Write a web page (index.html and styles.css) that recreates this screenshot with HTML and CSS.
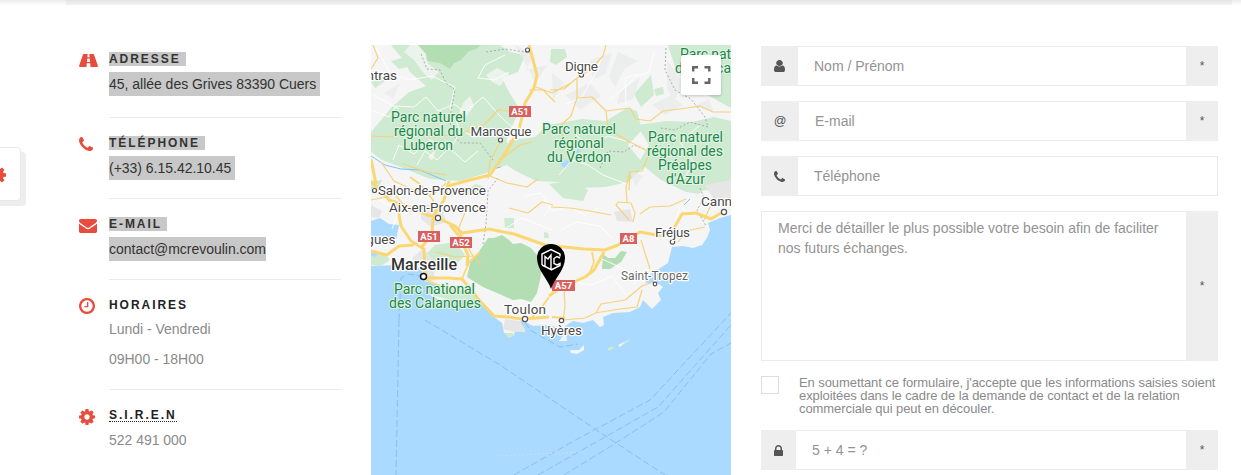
FILE: index.html
```
<!DOCTYPE html>
<html lang="fr">
<head>
<meta charset="utf-8">
<title>Contact</title>
<link rel="stylesheet" href="styles.css">
</head>
<body>
<svg class="defs" width="0" height="0">
  <symbol id="phone" viewBox="192 128 1408 1408"><path d="M1600 1240q0 27-10 70.500t-21 68.500q-21 50-122 106-94 51-186 51-27 0-53-3.500t-57.500-12.500-47-14.500-55.500-20.500-49-18q-98-35-175-83-127-79-264-216t-216-264q-48-77-83-175-3-9-18-49t-20.500-55.500-14.500-47-12.500-57.500-3.500-53q0-92 51-186 56-101 106-122 25-11 68.500-21t70.500-10q14 0 21 3 18 6 53 76 11 19 30 54t35 63.500 31 53.500q3 4 17.500 25t21.500 35.500 7 28.500q0 20-28.500 50t-62 55-62 53-28.500 46q0 9 5 22.500t8.500 20.500 14 24 11.500 19q76 137 174 235t235 174q2 1 19 11.500t24 14 20.500 8.500 22.500 5q18 0 46-28.500t53-62 55-62 50-28.500q14 0 28.500 7t35.500 21.500 25 17.500q25 15 53.500 31t63.500 35 54 30q70 35 76 53 3 7 3 21z"/></symbol>
  <symbol id="cog" viewBox="128 128 1536 1536"><path d="M1152 896q0-106-75-181t-181-75-181 75-75 181 75 181 181 75 181-75 75-181zm512-109v222q0 12-8 23t-20 13l-185 28q-19 54-39 91 35 50 107 138 10 12 10 25t-9 23q-27 37-99 108t-94 71q-12 0-26-9l-138-108q-44 23-91 38-16 136-29 186-7 28-36 28h-222q-14 0-24.500-8.500t-11.500-21.500l-28-184q-49-16-90-37l-141 107q-10 9-25 9-14 0-25-11-126-114-165-168-7-10-7-23 0-12 8-23 15-21 51-66.500t54-70.500q-27-50-41-99l-183-27q-13-2-21-12.500t-8-23.500v-222q0-12 8-23t19-13l186-28q14-46 39-92-40-57-107-138-10-12-10-24 0-10 9-23 26-36 98.500-107.500t94.500-71.500q13 0 26 10l138 107q44-23 91-38 16-136 29-186 7-28 36-28h222q14 0 24.500 8.500t11.500 21.500l28 184q49 16 90 37l142-107q9-9 24-9 13 0 25 10 129 119 165 170 7 8 7 22 0 12-8 23-15 21-51 66.500t-54 70.500q26 50 41 98l183 28q13 2 21 12.500t8 23.500z"/></symbol>
</svg>

<div class="topbar"><div class="topbar-strip"></div></div>
<div class="side-tab"><svg class="side-cog"><use href="#cog"/></svg></div>

<main class="contact">
  <section class="infos">
    <div class="info first">
      <div class="ico road"><svg width="19" height="13" viewBox="0 0 19 13"><path fill-rule="evenodd" d="M4.600 0H8.700L8.400 3.200H10.600L10.300 0H14.400Q14.800 0 15 .5L18.800 11.400Q19.200 13 18 13H11.500L11.200 9.300H7.800L7.500 13H1Q-.2 13 .2 11.400L4 .5Q4.200 0 4.600 0ZM8.300 4.600 8 7.900H11L10.700 4.600Z"/></svg></div>
      <div class="txt"><h4><span class="sel">ADRESSE&nbsp;</span></h4><p><span class="sel">45, allée des Grives 83390 Cuers&nbsp;</span></p></div>
    </div>
    <div class="info">
      <div class="ico"><svg width="14" height="14"><use href="#phone"/></svg></div>
      <div class="txt"><h4><span class="sel">TÉLÉPHONE&nbsp;</span></h4><p><span class="sel">(+33) 6.15.42.10.45&nbsp;</span></p></div>
    </div>
    <div class="info">
      <div class="ico mail"><svg width="18" height="14" viewBox="0 256 1792 1408" preserveAspectRatio="none"><path d="M1792 710v794q0 66-47 113t-113 47h-1472q-66 0-113-47t-47-113v-794q44 49 101 87 362 246 497 345 57 42 92.500 65.500t94.500 48 110 24.500h2q51 0 110-24.500t94.500-48 92.500-65.500q170-123 498-345 57-39 100-87zm0-294q0 79-49 151t-122 123q-376 261-468 325-10 7-42.500 31t-54 38.500-52 32.500-57.500 27-50 9h-2q-23 0-50-9t-57.500-27-52-32.500-54-38.500-42.500-31q-91-64-262-182.500t-205-142.500q-62-42-117-115.500t-55-136.500q0-78 41.500-130t118.500-52h1472q65 0 112.500 47t47.500 113z"/></svg></div>
      <div class="txt"><h4><span class="sel">E-MAIL&nbsp;</span></h4><p><span class="sel">contact@mcrevoulin.com</span></p></div>
    </div>
    <div class="info hours">
      <div class="ico"><svg width="16" height="16" viewBox="128 128 1536 1536"><path d="M1024 544v448q0 14-9 23t-23 9h-320q-14 0-23-9t-9-23v-64q0-14 9-23t23-9h224v-352q0-14 9-23t23-9h64q14 0 23 9t9 23zm416 352q0-148-73-273t-198-198-273-73-273 73-198 198-73 273 73 273 198 198 273 73 273-73 198-198 73-273zm224 0q0 209-103 385.500t-279.500 279.500-385.500 103-385.500-103-279.500-279.500-103-385.500 103-385.500 279.500-279.500 385.500-103 385.500 103 279.500 279.500 103 385.500z"/></svg></div>
      <div class="txt"><h4>HORAIRES</h4><p>Lundi - Vendredi</p><p>09H00 - 18H00</p></div>
    </div>
    <div class="info last">
      <div class="ico"><svg width="16" height="16"><use href="#cog"/></svg></div>
      <div class="txt"><h4><abbr>S.I.R.E.N</abbr></h4><p>522 491 000</p></div>
    </div>
  </section>

  <section class="map">
    <svg class="map-canvas" width="360" height="430" viewBox="371 45 360 430">
      <rect class="sea" x="371" y="45" width="360" height="430"/>
      <path class="land" d="M371 45H731V215L720 218 708 223 710 230 707 238 702 245 693 248 683 246 672 247 668 263 660 268 650 274 645 283 657 283 663 287 658 293 661 300 652 309 643 300 640 307 630 312 613 313 603 317 604 325 600 327 593 320 583 323 573 321 565 326 567 341 559 341 563 336 557 327 545 325 533 326 522 320 517 325 525 332 515 331 514 335 504 333 502 323 494 317 486 308 480 300 470 299 450 300 440 300 430 295 437 285 425 281 423 270 416 267 400 265 371 266Z"/>
      <g class="park pale">
        <path d="M391 45H500L510 52 525 55 518 72 502 78 509 92 520 110 510 130 500 160 490 172 460 181 430 179 403 168 382 160 371 152V132L392 107 409 92 426 86 410 72 405 62Z"/>
        <path d="M371 82 379 75 388 79 375 88Z"/><path d="M391 61 406 57 412 66 399 69Z"/>
        <path d="M510 140 535 137 548 125 582 119 606 121 627 108 637 111 642 130 628 145 645 166 628 182 605 187 578 188 559 182 536 181 514 170 499 160Z"/>
        <path d="M637 125 667 121 692 122 714 117 731 121V183L710 190 686 192 661 180 639 162 649 145Z"/>
        <path d="M668 45H731V108L711 97 691 85 676 70Z"/>
        <path d="M551 49 565 49 567 57 556 65 550 62Z"/><path d="M634 94 651 75 654 95 641 107Z"/><path d="M654 89 663 87 664 94 656 96Z"/>
        <path d="M549 184 573 180 588 190 583 201 563 198Z"/><path d="M504 218 514 218 514 228 505 228Z"/>
        <path d="M426 254 435 245 455 242 465 255 455 266 435 263Z"/><path d="M371 255 384 253 390 260 381 266 371 265Z"/>
        <path d="M428 294 445 288 473 291 480 300 454 301Z"/><path d="M371 182 382 180 378 188 371 190Z"/>
        <path d="M544 232 548 233 549 238 544 238Z"/><path d="M681 181 706 187 699 194 687 192Z"/>
        <path d="M481 160 504 140 518 152 509 164 493 170Z"/><path d="M460 195 476 184 484 187 473 195Z"/>
      </g>
      <path class="land" d="M425 45 436 55 427 63 439 72 432 80 424 74 414 60 404 52 410 45ZM486 75 497 68 509 74 500 86 492 82ZM463 103 470 96 474 106 465 118 459 113ZM428 157 436 149 432 161Z" opacity=".75"/>
      <g class="park deep">
        <path d="M418 45H481L476 49 469 51 461 60 454 63 450 69 440 63 427 61 426 54Z"/>
        <path d="M467 277 470 263 480 250 488 238 494 238 502 235 509 240 513 244 521 243 531 248 543 262 540 280 537 293 531 302 521 299 513 300 497 293 483 287Z"/>
        <path d="M603 254 608 258 615 258 621 251 627 252 621 262 610 269 602 269Z"/>
      </g>
      <g class="urban"><path d="M423 249 432 258 435 280 426 282 420 267 412 258Z"/><path d="M505 319 520 321 526 331 514 332 503 329Z"/><path d="M421 205 440 205 447 222 431 227 421 219Z"/><path d="M614 212 630 209 633 222 617 221Z"/><path d="M705 185 731 180V202L714 200Z"/><path d="M371 205 382 211 379 218 371 217Z"/></g>
      <g class="relief"><path d="M590 60 612 53 605 74 593 80ZM618 52 638 61 625 68 615 87 609 77ZM566 95 590 83 601 96 580 110ZM620 92 640 77 633 99 617 104ZM667 60 683 83 674 102 667 88ZM515 45 535 55 525 70 547 65 536 83ZM652 105 671 95 683 105 665 115ZM691 107 709 99 713 111ZM552 73 564 83 553 100ZM384 93 400 83 393 99Z"/><path d="M664 146 674 160 662 153ZM630 170 643 176 635 187Z"/></g>
      <g class="sea"><path d="M371 221 380 218 389 224 399 225 396 240 384 245 376 240 371 235Z"/><path d="M561 163 567 160 570 163 566 168 562 167Z"/><path d="M575 152 579 149 581 151 577 154Z"/><path d="M371 251 379 253 375 257 371 255Z"/></g>
      <path class="river" d="M371 156 385 165 401 169 420 170 446 181M496 168 501 167M684 205 690 199"/>
      <path class="minor" d="M376 47 390 73 409 80 432 76 455 87 450 108 460 130 475 137M371 110 389 117 396 106 414 107 426 97 438 111 454 104 465 112 483 97 500 116 515 130M393 160 399 145 414 154 430 140 450 150 462 128M417 165 425 151 437 160 449 148 465 162 478 151M610 100 628 85 635 77 649 72 654 53M626 105 625 78 639 74M559 175 572 160 588 165 603 175 629 185M544 200 552 211 570 207 584 215 601 207M561 230 576 222 600 226 612 238M600 258 626 270 636 284M379 200 399 210 392 229M480 225 500 232 522 218 552 230M566 280 592 285 612 276 626 295M676 219 680 207 695 216M700 125 680 142 694 162 684 179"/>
      <path class="minor" d="M505 55 485 65 478 78 495 80 509 72M373 95 399 109M566 104 581 98 595 75 604 52M576 135 588 146 608 136 626 141M525 196 540 193 551 205 544 217"/>
      <path class="boundary" d="M421 54 427 69 440 70 446 83 455 90 451 112 450 133 461 143 480 143 493 160M486 52 505 49 531 53M666 48 665 70 675 90 691 99 705 117 708 127 690 122 675 130 660 128M600 168 608 151 624 152 634 145 646 150M483 244 486 224 488 191 498 178M700 188 704 198 697 210 706 226"/>
      <path class="secondary" d="M371 69 378 58 373 45M371 136 391 137 406 132 433 137 460 134 485 124 498 110 509 111M536 87 552 93 571 83 577 78M550 90 564 89 577 78 590 70 603 56 606 45M577 78 577 98 592 97 606 111 630 108 636 119 650 121 663 111 687 108 700 106 713 112 731 112M577 98 571 116 560 126 563 138M606 111 608 129 628 141 650 152 642 171 630 172 629 190M529 90 543 90 555 102M500 160 520 145 532 142M371 200 395 195 409 211 438 216M381 162 394 181 413 190 433 195 446 183M490 176 507 183 527 187 538 179M466 210 458 230 473 256 481 264M509 208 528 213 542 202 553 205M551 207 570 208 590 211 611 215M629 220 616 205 618 202 631 203 635 213 633 222M640 214 650 207 670 206 686 199M641 240 645 253 650 269M630 171 626 188 627 203M564 289 565 307 563 320 585 318 596 313 601 304 625 300 642 286 653 282M595 313 620 309 637 307 642 290M678 242 686 231 705 227M704 220 710 207 718 202M473 256 455 257 436 252M488 179 490 161 501 141M403 164 427 172 447 175"/>
      <path class="trunk" d="M529 45 533 60 537 75 534 88 525 103 519 130 504 155 490 175 466 181 448 186M371 159 376 184M371 181 389 200 410 207 427 215 438 218 455 226 462 233 489 229 514 234 545 245 584 249 605 250 618 245 628 239 640 232 662 236M449 181 444 200 433 217 432 234 421 248M397 203 401 226 411 241 424 249 425 275M450 225 460 237 468 255 467 266M423 278 448 278 462 279 480 301 494 316 508 317 522 319 536 318 549 317M549 296 560 288 585 277 594 270 604 252M673 230 682 214 696 213 711 219 721 213M371 251 387 255 399 246 414 245"/>
      <path class="trunk thin" d="M410 177 421 185 433 200 435 214M462 279 469 262 480 252M426 280 441 286 460 289M552 317 565 318M592 252 594 262 590 272M549 297 542 307 532 317"/>
      <g class="ferry"><path d="M399 320 396 475M424 275 421 276 408 274 401 278 399 320M425 320 500 365 604 435 665 475M514 475 572 442 650 400 731 313M538 475 575 454 658 407 731 325M564 475 608 448 664 412 711 354 731 343M525 322 530 330 560 347 578 344"/><path class="faint" d="M498 456 584 452"/></g>
      <path class="land" d="M570 350 579 350 584 345 584 350 577 354 571 353ZM618 345 626 341 620 347Z"/>
      <path class="park pale" d="M607 349 612 346 614 348 609 351ZM622 345 630 338 628 342ZM505 333 513 333 514 336 508 338Z"/>
      <g class="town">
        <circle cx="500.500" cy="140" r="2"/><circle cx="581.500" cy="75" r="2"/><circle cx="527.500" cy="50" r="2"/><circle cx="374.500" cy="190.500" r="2"/><circle cx="438" cy="218" r="2.600"/><circle cx="525" cy="319" r="2.600"/><circle cx="561.500" cy="320.500" r="2.200"/><circle cx="655" cy="284" r="1.800"/><circle cx="672.500" cy="242" r="2.200"/><circle cx="724" cy="212" r="2.600"/><circle class="city" cx="423.500" cy="276.500" r="3"/>
      </g>
      <g class="label">
        <text class="to-end" x="397" y="80">ntras</text>
        <text x="470.500" y="136" textLength="61">Manosque</text>
        <text x="565" y="71" textLength="33">Digne</text>
        <text x="378" y="195" textLength="108">Salon-de-Provence</text>
        <text x="389" y="212" textLength="97">Aix-en-Provence</text>
        <text class="to-end" x="395.500" y="243.500">gues</text>
        <text x="504" y="314" textLength="42">Toulon</text>
        <text x="541" y="335" textLength="41">Hyères</text>
        <text x="655" y="237" textLength="35">Fréjus</text>
        <text x="701" y="206">Cann</text>
        <text class="small" x="621" y="279.500" textLength="67">Saint-Tropez</text>
        <text class="big" x="391" y="270" textLength="66">Marseille</text>
      </g>
      <g class="label green">
        <text x="391" y="122" textLength="75">Parc naturel</text><text x="394" y="136" textLength="69">régional du</text><text x="403" y="150" textLength="50">Luberon</text>
        <text x="542" y="134" textLength="74">Parc naturel</text><text x="554" y="148" textLength="50">régional</text><text x="547" y="162" textLength="64">du Verdon</text>
        <text x="648" y="142" textLength="75">Parc naturel</text><text x="647" y="156" textLength="76">régional des</text><text x="658" y="170" textLength="54">Préalpes</text><text x="666" y="184" textLength="39">d'Azur</text>
        <text x="680" y="59" textLength="51">Parc nat</text><text x="675" y="73">d</text><text x="716" y="73" textLength="15">ca</text>
        <text x="394" y="294" textLength="81">Parc national</text><text x="389" y="308" textLength="92">des Calanques</text>
      </g>
      <g class="badge">
        <rect x="509" y="106" width="22" height="11"/><text x="520" y="115">A51</text>
        <rect x="418" y="231" width="22" height="11"/><text x="429" y="240">A51</text>
        <rect x="450" y="237" width="22" height="11"/><text x="461" y="246">A52</text>
        <rect x="620" y="233" width="17" height="11"/><text x="628.500" y="242">A8</text>
        <rect x="552" y="280" width="23" height="11"/><text x="563.500" y="289">A57</text>
      </g>
      <path class="pin" d="M551 289C548 279 537 270 537 258A14 14 0 0 1 565 258C565 270 554 279 551 289Z"/>
      <path class="pin-mark" d="M542 265V254L551 249.500 560 254V256.500M545 266.500V256.500L548 259 551 255V269.500L542 265M560 258 557 256.500 554 258.500V263.500L557 265 560 263.500V265.500L551 270"/>
    </svg>
    <div class="fullscreen"><svg width="20" height="19" viewBox="0 0 20 19"><path d="M2.200 6.500V2.200H7M13.500 2.200H18.300V6.500M18.300 13V17.800H13.500M7 17.800H2.200V13"/></svg></div>
  </section>

  <form class="form">
    <div class="group"><span class="addon"><svg width="11" height="12" viewBox="256 128 1280 1536" preserveAspectRatio="none"><path d="M1536 1399q0 109-62.500 187t-150.500 78h-854q-88 0-150.500-78t-62.500-187q0-85 8.500-160.500t31.500-152 58.500-131 94-89 134.500-34.500q131 128 313 128t313-128q76 0 134.500 34.500t94 89 58.500 131 31.500 152 8.500 160.500zm-256-887q0 159-112.500 271.500t-271.500 112.500-271.500-112.500-112.500-271.500 112.500-271.500 271.500-112.500 271.500 112.500 112.500 271.500z"/></svg></span><span class="field">Nom / Prénom</span><span class="req">*</span></div>
    <div class="group"><span class="addon at">@</span><span class="field">E-mail</span><span class="req">*</span></div>
    <div class="group"><span class="addon"><svg width="11" height="11"><use href="#phone"/></svg></span><span class="field end">Téléphone</span></div>
    <div class="group message"><span class="field area">Merci de détailler le plus possible votre besoin afin de faciliter<br>nos futurs échanges.</span><span class="req">*</span></div>
    <div class="consent"><span class="box"></span><span class="consent-text">En soumettant ce formulaire, j'accepte que les informations saisies soient<br>exploitées dans le cadre de la demande de contact et de la relation<br>commerciale qui peut en découler.</span></div>
    <div class="group"><span class="addon lock"><svg width="9" height="11" viewBox="320 128 1152 1408"><path d="M640 768h512v-192q0-106-75-181t-181-75-181 75-75 181v192zm832 96v576q0 40-28 68t-68 28h-960q-40 0-68-28t-28-68v-576q0-40 28-68t68-28h32v-192q0-184 132-316t316-132 316 132 132 316v192h32q40 0 68 28t28 68z"/></svg></span><span class="field">5 + 4 = ?</span><span class="req">*</span></div>
  </form>
</main>
</body>
</html>
```
FILE: styles.css
```
* { box-sizing: border-box; }
body { margin: 0; height: 475px; overflow: hidden; background: #fff; font: 14px/30px "Liberation Sans", Arial, sans-serif; color: #8a8a8a; }
.defs { position: absolute; }
.topbar { height: 5px; padding: 0 9px 0 66px; background: linear-gradient(#ececec, #fff); }
.topbar-strip { height: 5px; background: linear-gradient(#e2e2e2, #f1f1f1 80%); }
.side-tab { position: absolute; left: -34px; top: 147px; width: 55px; height: 54px; border: 1px solid #e8e8e8; border-radius: 4px; background: #fff; box-shadow: 5px 5px 0 #eee; }
.side-cog { position: absolute; right: 14px; top: 18px; width: 18px; height: 18px; fill: #e74c3c; }
.contact { display: grid; grid-template-columns: 262px 360px 457px; column-gap: 30px; padding: 40px 0 0 79px; }

.infos { display: flex; flex-direction: column; }
.info { display: flex; padding-top: 18px; }
.info.first { padding-top: 7px; }
.ico { width: 30px; padding-top: 1px; line-height: 0; }
.ico.road { padding-top: 2px; }
.ico.mail { padding-top: 2px; }
.hours .ico { padding-top: 0; }
.ico svg { fill: #e74c3c; }
.txt { flex: 1; padding-bottom: 15px; border-bottom: 1px solid #ebebeb; }
.first .txt { padding-bottom: 18px; }
.last .txt { border: 0; }
h4 { margin: 0 0 3px; font-size: 12px; line-height: 14px; letter-spacing: 1.95px; color: #222; }
.hours h4 { margin-bottom: 2px; }
p { margin: 0; height: 30px; letter-spacing: -.02px; }
.sel { display: block; width: fit-content; background: #c8c8c8; color: #333; }
h4 .sel { height: 14px; }
p .sel { height: 24px; line-height: 24px; position: relative; top: 3px; }
abbr { display: block; width: fit-content; height: 14px; border-bottom: 1px dotted #222; }

.map { position: relative; width: 360px; height: 430px; overflow: hidden; }
.map-canvas { display: block; }
.sea { fill: #aadaff; }
.land { fill: #f5f5f5; }
.pale { fill: #ceead0; }
.deep { fill: #b3ddb3; }
.urban { fill: #e6e6e6; }
.relief { fill: #e9ebea; opacity: .7; }
.river, .minor, .boundary, .secondary, .trunk, .ferry { fill: none; stroke-linejoin: round; }
.river { stroke: #7fc4f5; stroke-width: 1; }
.minor { stroke: #fff; stroke-width: .9; }
.boundary { stroke: #a0a5a8; stroke-width: .9; stroke-dasharray: 2 2; }
.secondary { stroke: #f6d27c; stroke-width: 1.2; }
.trunk { stroke: #fbd774; stroke-width: 3; }
.trunk.thin { stroke-width: 1.8; }
.ferry { stroke: #8dbdf2; stroke-width: 1; stroke-dasharray: 7 3; }
.ferry .faint { stroke: #c0e0f5; stroke-dasharray: 2 2; }
.town circle { fill: #fff; stroke: #555; stroke-width: 1.2; }
.town .city { stroke: #111; stroke-width: 1.5; }
.label { font: 13.5px Roboto, sans-serif; fill: #484848; stroke: #fff; stroke-width: 2.4px; stroke-linejoin: round; paint-order: stroke; }
.label .to-end { text-anchor: end; }
.label .small { font-size: 12px; fill: #666; }
.label .big { font-size: 16px; font-weight: 500; fill: #333; }
.label.green { font-size: 14px; fill: #20874a; stroke: #e4f4e4; stroke-width: 2px; }
.badge rect { fill: #d9605f; }
.badge text { font: bold 9.5px Roboto, sans-serif; fill: #fff; text-anchor: middle; }
.pin { fill: #000; }
.pin-mark { fill: none; stroke: #fff; stroke-width: 1.4; }
.fullscreen { position: absolute; top: 10px; right: 10px; width: 40px; height: 40px; padding: 10px; border-radius: 2px; background: #fff; box-shadow: 0 1px 3px rgba(0,0,0,.2); line-height: 0; }
.fullscreen path { fill: none; stroke: #666; stroke-width: 2.4; }

.form { display: flex; flex-direction: column; gap: 15px; padding-top: 1px; }
.group { display: flex; height: 40px; }
.addon, .req { display: flex; align-items: center; justify-content: center; background: #eee; color: #555; font-size: 12px; }
.addon { width: 37px; }
.addon svg { fill: #555; }
.addon.at { width: 38px; font-size: 12.5px; }
.addon.lock { width: 35px; }
.req { width: 32px; }
.field { flex: 1; padding: 0 16px; border: 1px solid #ebebeb; border-width: 1px 0; line-height: 38px; color: #939393; }
.field.end { border-right-width: 1px; }
.message { height: 150px; }
.field.area { padding-top: 6px; border-left-width: 1px; line-height: 20px; }
.consent { display: flex; height: 39px; }
.box { width: 18px; height: 18px; border: 1px solid #ddd; margin-right: 20px; }
.consent-text { font-size: 13px; line-height: 13px; letter-spacing: -.08px; white-space: nowrap; }
```
